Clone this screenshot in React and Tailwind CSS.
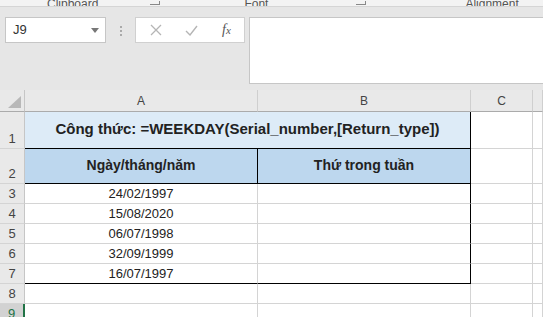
import React from "react";

const dates = ["24/02/1997", "15/08/2020", "06/07/1998", "32/09/1999", "16/07/1997"];

const RowHead = ({ n, selected }) => (
  <div
    className={`flex items-end justify-center pb-[1px] text-[13px] leading-none border-b border-[#d4d4d4] ${
      selected
        ? "bg-[#d2d2d2] text-[#217346] border-r-2 border-r-[#217346]"
        : "bg-[#e9e9e9] text-[#444] border-r border-r-[#c6c6c6]"
    }`}
  >
    <span className="mb-[2px]">{n}</span>
  </div>
);

const Cell = ({ className = "", children }) => (
  <div className={`bg-white border-r border-b border-[#d4d4d4] ${className}`}>{children}</div>
);

const App = () => {
  return (
    <div className="w-[543px] h-[317px] overflow-hidden bg-[#e6e6e6] font-['Liberation_Sans',sans-serif] text-[#222]">
      {/* ribbon group labels, cut off at the top */}
      <div className="h-[7px] overflow-hidden relative border-b border-[#d5d5d5] bg-[#f3f3f3]">
        <div className="flex items-end h-[7px] text-[12px] leading-none text-[#555]">
          <span className="ml-[47px] translate-y-[3px]">Clipboard</span>
          <span className="ml-[52px] w-[10px] h-[4px] border-b border-r border-[#888] translate-y-[-2px]"></span>
          <span className="ml-[84px] translate-y-[3px]">Font</span>
          <span className="ml-[88px] w-[10px] h-[4px] border-b border-r border-[#888] translate-y-[-2px]"></span>
          <span className="ml-[99px] translate-y-[3px]">Alignment</span>
        </div>
      </div>

      {/* formula bar */}
      <div className="flex items-start mt-[10px] h-[67px]">
        <div className="ml-[5px] w-[101px] h-[26px] bg-white border border-[#c6c6c6] flex items-center justify-between pl-[7px] pr-[6px]">
          <span className="text-[13px] text-[#333]">J9</span>
          <svg width="8" height="5" viewBox="0 0 8 5">
            <path d="M0 0 L8 0 L4 5 Z" fill="#777" />
          </svg>
        </div>
        <div className="ml-[14px] mt-[9px] flex flex-col gap-[2px]">
          <span className="w-[2px] h-[2px] bg-[#aaa]"></span>
          <span className="w-[2px] h-[2px] bg-[#aaa]"></span>
          <span className="w-[2px] h-[2px] bg-[#aaa]"></span>
        </div>
        <div className="ml-[13px] w-[110px] h-[26px] bg-white border border-[#d0d0d0] flex items-center">
          <svg className="ml-[14px]" width="12" height="12" viewBox="0 0 12 12">
            <path d="M1 1 L11 11 M11 1 L1 11" stroke="#b5b5b5" strokeWidth="1.3" />
          </svg>
          <svg className="ml-[23px]" width="13" height="11" viewBox="0 0 13 11">
            <path d="M1 6 L5 10 L12 1" stroke="#b5b5b5" strokeWidth="1.4" fill="none" />
          </svg>
          <span className="ml-[24px] text-[14px] italic font-['Liberation_Serif',serif] text-[#555] leading-none">
            f<span className="text-[11px]">x</span>
          </span>
        </div>
        <div className="ml-[4px] flex-1 h-[67px] bg-white border border-[#c6c6c6] border-r-0"></div>
      </div>

      {/* sheet grid */}
      <div className="mt-[6px] grid grid-cols-[25px_233px_213px_62px_1fr] grid-rows-[22px_37px_35px_20px_20px_20px_20px_20px_20px_20px]">
        {/* column headers */}
        <div className="relative bg-[#e9e9e9] border-r border-b border-[#c6c6c6] border-b-[#ababab]">
          <svg className="absolute right-[3px] bottom-[3px]" width="13" height="12" viewBox="0 0 13 12">
            <path d="M13 0 L13 12 L0 12 Z" fill="#b8b8b8" />
          </svg>
        </div>
        {["A", "B", "C", ""].map((c, i) => (
          <div
            key={i}
            className="bg-[#e9e9e9] border-r border-[#cfcfcf] border-b border-b-[#ababab] flex items-center justify-center text-[12px] text-[#444]"
          >
            {c}
          </div>
        ))}

        {/* row 1 */}
        <RowHead n="1" />
        <div className="col-span-2 bg-[#ddebf7] border-r border-b border-black flex items-center justify-center font-bold text-[15px] pb-[2px]">
          Công thức: =WEEKDAY(Serial_number,[Return_type])
        </div>
        <Cell />
        <Cell />

        {/* row 2 */}
        <RowHead n="2" />
        <div className="bg-[#bdd7ee] border-r border-b border-black flex items-center justify-center font-bold text-[14px] pb-[1px]">
          Ngày/tháng/năm
        </div>
        <div className="bg-[#bdd7ee] border-r border-b border-black flex items-center justify-center font-bold text-[14px] pb-[1px]">
          Thứ trong tuần
        </div>
        <Cell />
        <Cell />

        {/* rows 3-7 */}
        {dates.map((d, i) => (
          <React.Fragment key={d}>
            <RowHead n={String(i + 3)} />
            <div
              className={`bg-white border-r border-[#d4d4d4] border-b flex items-center justify-center text-[13px] pt-[1px] ${
                i === 4 ? "border-b-black" : "border-b-[#d4d4d4]"
              }`}
            >
              {d}
            </div>
            <div
              className={`bg-white border-r border-r-black border-b ${
                i === 4 ? "border-b-black" : "border-b-[#d4d4d4]"
              }`}
            ></div>
            <Cell />
            <Cell />
          </React.Fragment>
        ))}

        {/* row 8 */}
        <RowHead n="8" />
        <Cell />
        <Cell />
        <Cell />
        <Cell />

        {/* row 9 (selected) */}
        <RowHead n="9" selected />
        <Cell />
        <Cell />
        <Cell />
        <Cell />
      </div>
    </div>
  );
};

export default App;
